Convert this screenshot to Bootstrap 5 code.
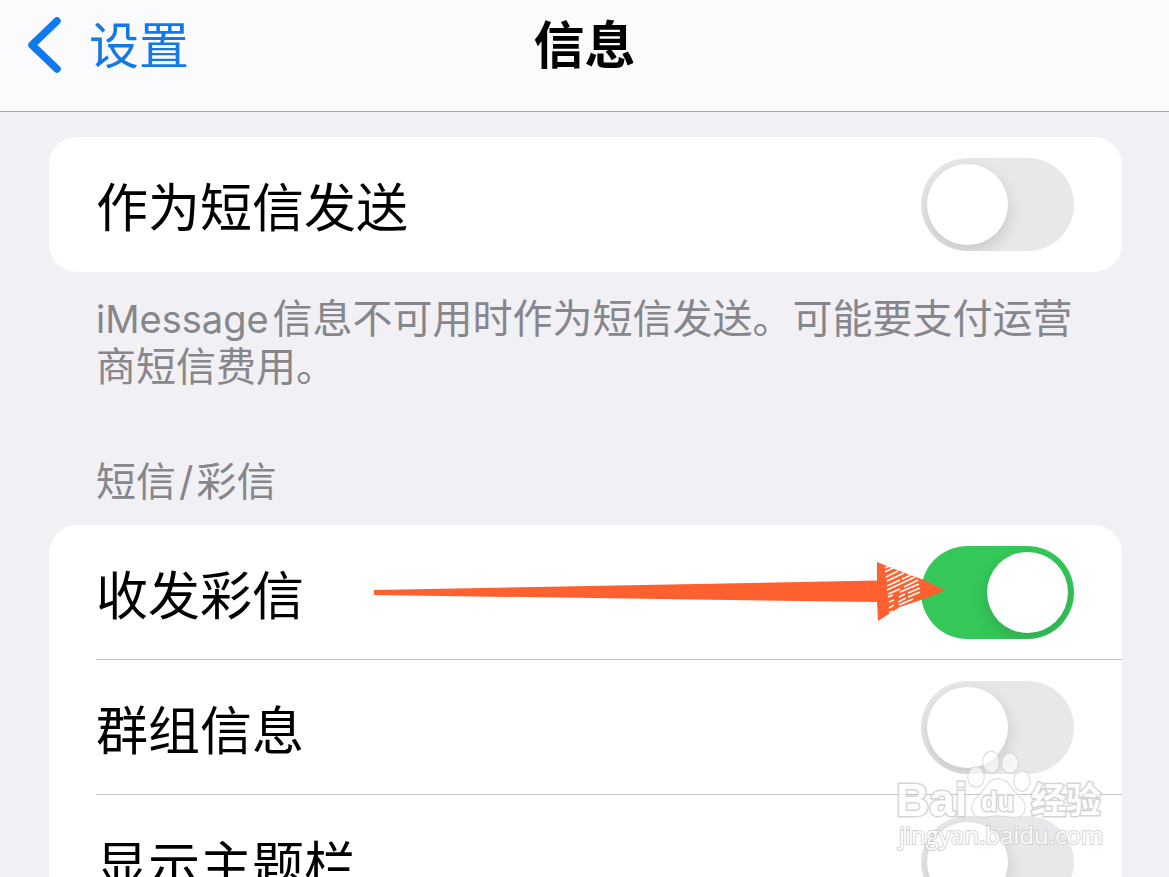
<!DOCTYPE html>
<html lang="zh-CN">
<head>
<meta charset="utf-8">
<meta name="viewport" content="width=device-width, initial-scale=1">
<title>信息</title>
<link rel="stylesheet" href="https://cdn.jsdelivr.net/npm/bootstrap@5.3.0/dist/css/bootstrap.min.css">
<style>
  body { background: #f0f0f5; color: #000; font-family: Inter, "Noto Sans CJK SC", sans-serif; }
  .topbar { height: 112px; padding: 0 28px 19px; background: #fbfbfd; border-bottom: 1px solid #a9a9ae; }
  .topbar a { color: #1479e6; font-size: 50px; line-height: 72px; gap: 27px; }
  .topbar h1 { font-size: 51px; line-height: 72px; font-weight: 700; }
  .page-body { padding: 25px 47px 0 49px; }
  .group { border: 0; border-radius: 28px; }
  .setting { border: 0; padding: 0 48px 0 0; margin-left: 47px; height: 135px; background: none; color: #000; border-radius: 0; }
  .setting:not(:last-child) { border-bottom: 1px solid #c3c3c6; }
  .setting label { font-size: 52px; line-height: 72px; padding-top: 9px; }
  .note { font-size: 40px; line-height: 48px; color: #86868b; padding: 0 40px 0 47px; }
  .note .latin { font-size: 38px; line-height: 40px; margin-right: 4px; }
  .note .slash { margin: 0 3px; }
  .note-below { margin: 23px 0 67px; }
  .note-title { margin: 0 0 19px; font-weight: 400; }
  .toggle.form-check-input { width: 153px; height: 93px; margin: 0; border: 0; border-radius: 47px; background: #e8e8ea; overflow: hidden; position: relative; }
  .toggle.form-check-input::before { content: ""; display: block; width: 81px; height: 81px; margin: 6px; border-radius: 50%; background: #fff; box-shadow: 0 6px 16px rgba(0,0,0,.15); }
  .toggle.form-check-input:checked { background: #35c759; }
  .toggle.form-check-input:checked::before { margin-left: 66px; }
  .pointer { right: 176px; top: 35px; }
  .brandmark { right: 56px; bottom: 20px; opacity: .8; }
</style>
</head>
<body>
<div class="vh-100 overflow-hidden position-relative">
  <header class="topbar row g-0 align-items-center">
    <div class="col">
      <a href="#" class="d-inline-flex align-items-center text-decoration-none">
        <svg width="34" height="58" viewBox="0 0 34 58" fill="none" stroke="#0f79ee" stroke-width="7.5" stroke-linecap="round" stroke-linejoin="round" aria-hidden="true"><path d="M29 4 4 28 29 52"/></svg>
        <span>设置</span>
      </a>
    </div>
    <h1 class="col-auto m-0">信息</h1>
    <div class="col"></div>
  </header>

  <main class="page-body">
    <div class="card group">
      <div class="setting d-flex align-items-center justify-content-between">
        <label for="sms">作为短信发送</label>
        <input class="form-check-input toggle" type="checkbox" role="switch" id="sms">
      </div>
    </div>
    <p class="note note-below"><span class="latin">iMessage</span>信息不可用时作为短信发送。可能要支付运营商短信费用。</p>

    <h2 class="note note-title">短信<span class="slash">/</span>彩信</h2>
    <div class="card group">
      <div class="setting d-flex align-items-center justify-content-between position-relative">
        <label for="mms">收发彩信</label>
        <input class="form-check-input toggle" type="checkbox" role="switch" id="mms" checked>
        <svg class="pointer position-absolute" width="572" height="64" viewBox="0 0 572 64" aria-hidden="true">
          <path fill="#ff602f" d="M0 30 503 20.500V2L528 12 550 20 571 30.500 550 39 526 47 504 61 503 42 0 35Z"/>
          <path fill="none" stroke="#fff" stroke-width="1.500" d="M511 8l5-2M511 12l8-4M512 17l12-6M513 21l17-8M513 26l13-6m2-1l9-4M513 30l28-13M514 34l12-5m4-2l14-7M514 37l5-2m7-3l19-8M515 42l5-2m5-3l6-3m3-1l12-5M524 42l8-4m2-1l12-5M525 45l14-6M515 48l5-3M515 53l4-2"/>
        </svg>
      </div>
      <div class="setting d-flex align-items-center justify-content-between">
        <label for="group">群组信息</label>
        <input class="form-check-input toggle" type="checkbox" role="switch" id="group">
      </div>
      <div class="setting d-flex align-items-center justify-content-between">
        <label for="subject">显示主题栏</label>
        <input class="form-check-input toggle" type="checkbox" role="switch" id="subject">
      </div>
    </div>
  </main>

  <svg class="brandmark position-absolute pe-none" width="220" height="108" viewBox="0 0 220 108" fill="#fff" stroke="#cbcbcd" stroke-width="1.500" paint-order="stroke" aria-hidden="true">
    <g fill-opacity=".8">
      <ellipse cx="83" cy="28" rx="8" ry="10"/>
      <ellipse cx="98" cy="13" rx="8" ry="10.500"/>
      <ellipse cx="117" cy="14" rx="8" ry="10"/>
      <ellipse cx="129" cy="32" rx="8" ry="10"/>
      <path d="M105 30C97 30 94 36 90 42 85 48 79 51 79 59 79 66 85 69 92 68 100 66 109 66 118 68 127 70 132 65 132 58 132 51 125 47 120 41 115 34 112 30 105 30Z"/>
    </g>
    <g stroke-width="3" font-weight="700">
      <text x="3" y="67" font-family="Liberation Sans, sans-serif" font-size="46">Bai</text>
      <text x="88" y="62" font-family="Liberation Sans, sans-serif" font-size="27">du</text>
      <text x="138" y="64" font-family="Noto Sans CJK SC, sans-serif" font-size="35">经验</text>
    </g>
    <text x="6" y="95" stroke-width="2" font-family="Open Sans, sans-serif" font-size="24">jingyan.baidu.com</text>
  </svg>
</div>
<script src="https://cdn.jsdelivr.net/npm/bootstrap@5.3.0/dist/js/bootstrap.bundle.min.js"></script>
</body>
</html>
